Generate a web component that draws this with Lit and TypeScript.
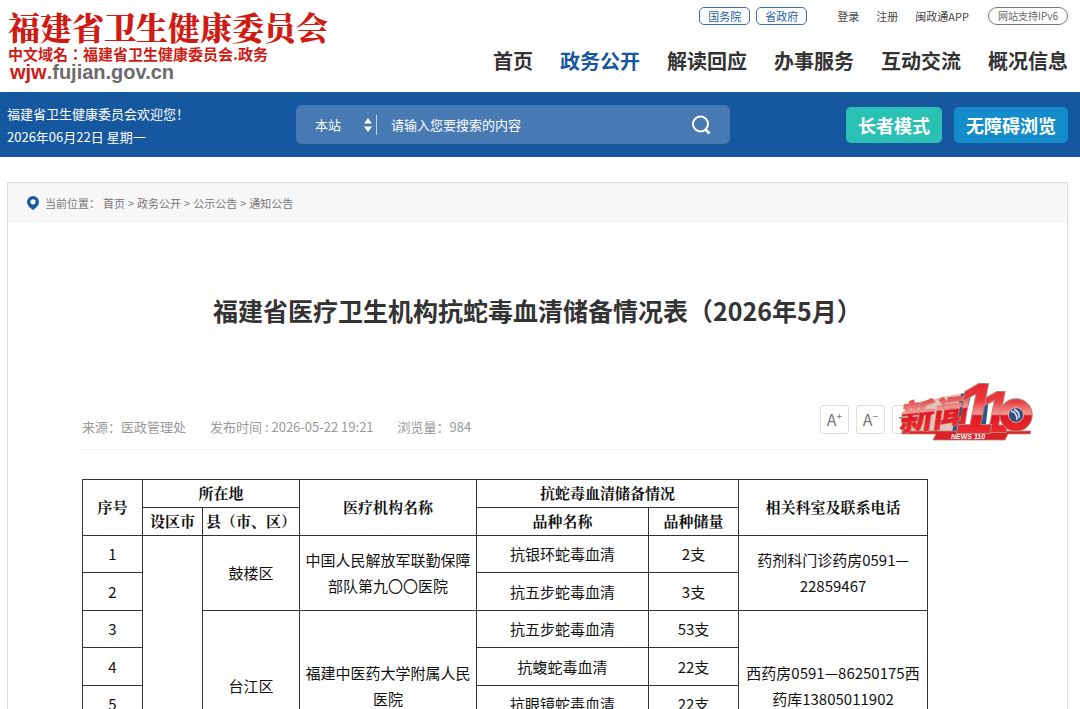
import { LitElement, html, css, svg, nothing } from "lit";
import { customElement } from "lit/decorators.js";
import { classMap } from "lit/directives/class-map.js";

interface Group {
  district: string;
  hospital: string;
  contact: string;
  items: [string, string][];
}

const NAV = ["首页", "政务公开", "解读回应", "办事服务", "互动交流", "概况信息"];
const CRUMBS = ["首页", "政务公开", "公示公告", "通知公告"];
const GROUPS: Group[] = [
  {
    district: "鼓楼区",
    hospital: "中国人民解放军联勤保障部队第九〇〇医院",
    contact: "药剂科门诊药房0591—22859467",
    items: [["抗银环蛇毒血清", "2支"], ["抗五步蛇毒血清", "3支"]],
  },
  {
    district: "台江区",
    hospital: "福建中医药大学附属人民医院",
    contact: "西药房0591—86250175西药库13805011902",
    items: [["抗五步蛇毒血清", "53支"], ["抗蝮蛇毒血清", "22支"], ["抗眼镜蛇毒血清", "22支"], ["", ""]],
  },
];

@customElement("site-header")
class SiteHeader extends LitElement {
  static styles = css`
    :host { display: block; }
    a { color: inherit; text-decoration: none; }
    .top { display: flex; justify-content: space-between; height: 92px; padding: 0 12px 0 8px; }
    .brand { padding-top: 7px; color: #cf1b14; }
    .name { font: 900 32px/38px "Noto Serif CJK SC", "Noto Serif CJK", serif; }
    .domain { font: 700 15px/17px "Noto Sans CJK TC", "Noto Sans CJK SC", sans-serif; }
    .url { font: 700 20px/20px "Liberation Sans", sans-serif; color: #6b6b6b; padding: 0 2px; }
    .url b { color: #cf1b14; }
    .right { display: flex; flex-direction: column; align-items: flex-end; padding-top: 7px; }
    .quick { display: flex; align-items: center; font-size: 11px; line-height: 16px; color: #444; }
    .tag { border: 1px solid #3a6ca8; border-radius: 5px; padding: 0 8px; color: #2460a4; margin-right: 6px; }
    .link { margin-right: 17px; }
    .first { margin-left: 24px; }
    .ipv6 { border: 1px solid #777; border-radius: 9px; padding: 0 9px; font-size: 10px; color: #666; margin-left: 2px; }
    .nav { display: flex; gap: 27px; margin-top: 21px; font-size: 20px; line-height: 30px; color: #333; font-weight: 700; }
    .active { color: #16579f; }
    .band { display: flex; align-items: center; height: 65px; padding: 0 12px 0 7px; background: #16589f; color: #fff; }
    .hello { width: 289px; font-size: 13px; line-height: 23px; }
    .hello p { margin: 0; }
    .search { display: flex; align-items: center; width: 434px; height: 39px; box-sizing: border-box; padding: 0 19px; border-radius: 6px; background: #477ab3; }
    select, input { appearance: none; border: 0; padding: 0; margin: 0; outline: 0; background: transparent; color: #fff; font: inherit; font-size: 13px; }
    select { width: 49px; }
    input { flex: 1; min-width: 0; padding-left: 14px; }
    input::placeholder { color: #fff; opacity: 1; }
    .bar { width: 1px; height: 20px; background: #c3d4e8; margin-left: 4px; }
    button { border: 0; padding: 0; font: inherit; color: #fff; cursor: pointer; background: none; }
    .go { display: flex; }
    .modes { display: flex; gap: 12px; margin-left: auto; }
    .mode { height: 36px; padding: 0 12px; border-radius: 5px; font-weight: 700; font-size: 18px; background: #158cca; }
    .elder { background: #2ac0b3; }
  `;
  render() {
    return html`
      <header class="top">
        <div class="brand">
          <div class="name">福建省卫生健康委员会</div>
          <div class="domain">中文域名：福建省卫生健康委员会.政务</div>
          <div class="url"><b>wjw</b>.fujian.gov.cn</div>
        </div>
        <div class="right">
          <div class="quick">
            <a class="tag" href="#">国务院</a><a class="tag" href="#">省政府</a>
            <a class="link first" href="#">登录</a><a class="link" href="#">注册</a>
            <a class="link" href="#">闽政通APP</a><a class="ipv6" href="#">网站支持IPv6</a>
          </div>
          <nav class="nav">
            ${NAV.map((n) => html`<a href="#" class=${classMap({ active: n === "政务公开" })}>${n}</a>`)}
          </nav>
        </div>
      </header>
      <div class="band">
        <div class="hello"><p>福建省卫生健康委员会欢迎您！</p><p>2026年06月22日 星期一</p></div>
        <form class="search" @submit=${(e: Event) => e.preventDefault()}>
          <select aria-label="搜索范围"><option>本站</option></select>
          <svg width="8" height="14" viewBox="0 0 8 14" fill="#fff"><path d="M4 0 8 5.500H0zM4 14 0 8.500H8z" /></svg>
          <span class="bar"></span>
          <input type="text" aria-label="搜索" placeholder="请输入您要搜索的内容" />
          <button class="go" aria-label="搜索">
            <svg width="20" height="20" viewBox="0 0 20 20" fill="none" stroke="#fff" stroke-width="2"><circle cx="9.500" cy="9" r="7.500" /><path d="m14.500 14.500 4 4" stroke-width="2.500" /></svg>
          </button>
        </form>
        <div class="modes">
          <button class="mode elder">长者模式</button><button class="mode">无障碍浏览</button>
        </div>
      </div>`;
  }
}

@customElement("news-badge")
class NewsBadge extends LitElement {
  static styles = css`
    :host { display: block; }
    svg { display: block; overflow: visible; }
    .cn { font: italic 900 34px "Noto Sans CJK SC", sans-serif; stroke-width: 1px; }
    .one { font: italic 900 70px "Liberation Sans", sans-serif; stroke-width: 2px; }
    .two { font: italic 900 58px "Liberation Sans", sans-serif; stroke-width: 2px; }
    .en { font: italic 700 7px "Liberation Sans", sans-serif; }
    .edge { paint-order: stroke; stroke: #b08a74; }
  `;
  render() {
    return html`<svg width="134" height="64" viewBox="0 0 134 64" role="img" aria-label="新闻110">
      <defs>
        <linearGradient id="r" gradientUnits="userSpaceOnUse" x1="0" y1="2" x2="0" y2="54">
          <stop offset="0" stop-color="#e5252b" /><stop offset=".35" stop-color="#ea3a40" /><stop offset=".6" stop-color="#f79a9a" />
          <stop offset=".63" stop-color="#e01822" /><stop offset="1" stop-color="#f02a34" />
        </linearGradient>
      </defs>
      <path d="M8 23 63 12 68 12 66 50 3 51z" fill="#e3c3ba" />
      <path d="M62 13 73 10 63 51 53 51zM84 20 90 16 86 51 78 51z" fill="#2c5488" />
      <path d="M3 50H132L131 53H109L106 59H34L37 53H3z" fill="#dc2028" stroke="#b98c79" stroke-width=".8" />
      <g fill="url(#r)">
        <text class="cn edge" x="0" y="50" transform="rotate(-6 0 50)">新闻</text>
        <text class="two edge" x="79" y="51">1</text>
        <text class="one edge" x="57" y="52">1</text>
      </g>
      ${svg`<circle cx="117" cy="34" r="11.500" fill="none" stroke="#a98a76" stroke-width="10.500" />
      <circle cx="117" cy="34" r="11.500" fill="none" stroke="url(#r)" stroke-width="8.500" />
      <circle cx="117" cy="34" r="7.500" fill="#334f80" stroke="#d5b5a2" />
      <path d="M112 30q6 1 6 9M115 28q6 3 5 9" fill="none" stroke="#dce8f5" stroke-width="1.500" />`}
      <text class="en" x="52" y="58" fill="#fff">NEWS 110</text>
    </svg>`;
  }
}

@customElement("stock-table")
class StockTable extends LitElement {
  static styles = css`
    :host { display: block; }
    table { width: 846px; max-width: 100%; table-layout: fixed; border-collapse: collapse; color: #111; font-size: 15px; line-height: 26px; }
    th, td { border: 1px solid #333; padding: 0 4px; text-align: center; vertical-align: middle; }
    th { height: 28px; box-sizing: border-box; padding: 0 0 3px; font-family: "Noto Serif CJK SC", "Noto Serif CJK", serif; font-weight: 700; line-height: 23px; white-space: nowrap; }
    td { height: 37px; box-sizing: border-box; }
    .even td { height: 38px; }
    .no { width: 60px; }
    .area { width: 97px; }
    .org { width: 177px; }
    .kind { width: 172px; }
    .count { width: 90px; }
  `;
  render() {
    let no = 0;
    const total = GROUPS.reduce((n, g) => n + g.items.length, 0);
    return html`<table>
      <colgroup><col class="no" /><col class="no" /><col class="area" /><col class="org" /><col class="kind" /><col class="count" /><col /></colgroup>
      <thead>
        <tr><th rowspan="2">序号</th><th colspan="2">所在地</th><th rowspan="2">医疗机构名称</th><th colspan="2">抗蛇毒血清储备情况</th><th rowspan="2">相关科室及联系电话</th></tr>
        <tr><th>设区市</th><th>县（市、区）</th><th>品种名称</th><th>品种储量</th></tr>
      </thead>
      <tbody>
        ${GROUPS.map((g) => g.items.map(([kind, count], i) => {
          no += 1;
          const span = g.items.length;
          return html`<tr class=${classMap({ even: no % 2 === 0 })}>
            <td>${no}</td>
            ${no === 1 ? html`<td rowspan=${total}></td>` : nothing}
            ${i === 0 ? html`<td rowspan=${span}>${g.district}</td><td rowspan=${span}>${g.hospital}</td>` : nothing}
            <td>${kind}</td><td>${count}</td>
            ${i === 0 ? html`<td rowspan=${span}>${g.contact}</td>` : nothing}
          </tr>`;
        }))}
      </tbody>
    </table>`;
  }
}

@customElement("app-root")
class AppRoot extends LitElement {
  static styles = css`
    :host { display: block; position: relative; height: 100vh; overflow: hidden; background: #fff; font-family: "Noto Sans CJK SC", sans-serif; }
    a { color: inherit; text-decoration: none; }
    .page { margin: 25px 12px 0 7px; border: 1px solid #ddd; }
    .crumbs { display: flex; align-items: center; gap: 3px; height: 40px; padding-left: 19px; background: #f7f7f7; color: #777; font-size: 11px; }
    .pin { margin-right: 3px; }
    .article { padding: 0 74px; }
    h1 { margin: 67px 0 0; text-align: center; font-size: 25px; line-height: 40px; font-weight: 700; color: #333; }
    .meta { display: flex; align-items: flex-end; gap: 24px; margin-top: 74px; height: 45px; border-bottom: 1px solid #f0f0f0; color: #999; font-size: 13px; line-height: 20px; }
    .meta span { padding-bottom: 12px; }
    .tools { display: flex; gap: 7px; margin: 0 72px 15px auto; }
    .tools button { display: flex; align-items: center; justify-content: center; width: 29px; height: 29px; padding: 0; border: 1px solid #ddd; border-radius: 3px; background: #fff; color: #777; font: 400 16px/27px "Noto Sans CJK SC", sans-serif; }
    sup { font-size: 10px; line-height: 10px; margin-bottom: 8px; }
    stock-table { margin-top: 29px; }
    .badge { position: absolute; top: 381px; right: 47px; }
  `;
  render() {
    return html`
      <site-header></site-header>
      <main class="page">
        <nav class="crumbs">
          <svg class="pin" width="12" height="14" viewBox="0 0 12 14"><path d="M6 0a6 6 0 0 0-6 6c0 3 3 6 6 8 3-2 6-5 6-8a6 6 0 0 0-6-6zm0 3.200a2.600 2.600 0 1 1 0 5.200 2.600 2.600 0 0 1 0-5.200z" fill="#1a599f" /></svg>
          <span>当前位置：</span>
          ${CRUMBS.map((c, i) => html`${i ? html`<span>&gt;</span>` : nothing}<a href="#">${c}</a>`)}
        </nav>
        <article class="article">
          <h1>福建省医疗卫生机构抗蛇毒血清储备情况表（2026年5月）</h1>
          <div class="meta">
            <span>来源：医政管理处</span><span>发布时间 : 2026-05-22 19:21</span><span>浏览量：984</span>
            <div class="tools">
              <button aria-label="放大字号">A<sup>+</sup></button>
              <button aria-label="缩小字号">A<sup>−</sup></button>
              <button aria-label="收藏"><svg width="17" height="17" viewBox="0 0 17 17" fill="none" stroke="#777"><path d="m8.500 1.500 2.100 4.600 5 .6-3.700 3.400 1 4.900-4.400-2.500L4.100 15l1-4.900L1.400 6.700l5-.6z" /></svg></button>
            </div>
          </div>
          <stock-table></stock-table>
        </article>
      </main>
      <news-badge class="badge"></news-badge>`;
  }
}
